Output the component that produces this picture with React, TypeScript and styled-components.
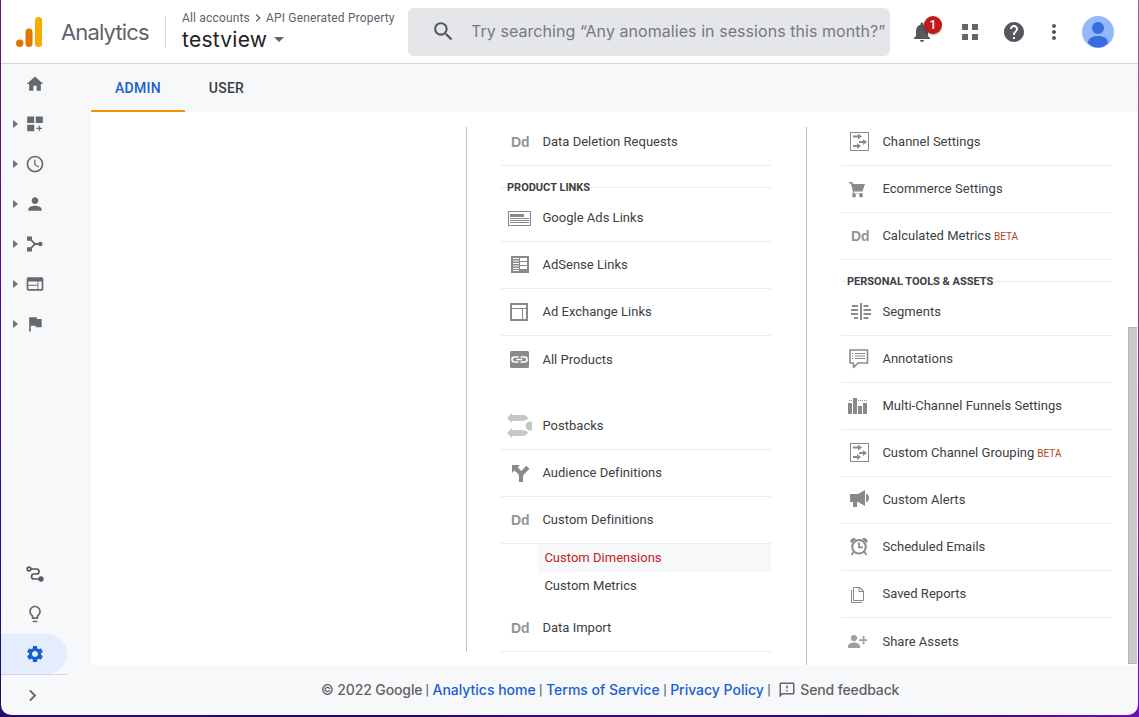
import React from 'react';
import styled, { createGlobalStyle } from 'styled-components';
import {
  MdHome, MdPerson, MdFlag, MdSettings, MdLightbulbOutline, MdAccessTime, MdWeb,
  MdNotifications, MdHelp, MdMoreVert, MdSearch, MdChevronRight, MdOutlineFeedback,
} from 'react-icons/md';

const display = "Inter, Roboto, sans-serif";

const GlobalStyle = createGlobalStyle`
  * { box-sizing: border-box; }
  body { margin: 0; font-family: Roboto, "Liberation Sans", sans-serif; color: #3c4043; }
  svg { display: block; flex: none; }
`;

const Desktop = styled.div`
  width: 1139px;
  height: 717px;
  padding: 0 1px 2px;
  overflow: hidden;
  background:
    linear-gradient(90deg, #250a6c 0%, #210963 38%, #34087f 45%, #260a78 75%, #4b0a8c 90%, #6c10b4 100%) 0 715px / 100% 2px no-repeat,
    linear-gradient(180deg, #a0648f 0%, #96457c 30%, #8d1f68 70%, #6c10b4 100%) 100% 0 / 20px 100% no-repeat,
    linear-gradient(180deg, #6d1183 0%, #4f0d86 40%, #2c0a7c 80%, #250a6c 100%);
`;

const Window = styled.div`
  height: 715px;
  display: flex;
  flex-direction: column;
  background: #f7f8fa;
  border-radius: 0 0 10px 10px;
  overflow: hidden;
`;

const Header = styled.header`
  height: 64px;
  flex: none;
  display: flex;
  align-items: center;
  background: #fff;
  border-bottom: 1px solid #d4d6d9;
  padding-left: 14px;
`;

const Product = styled.div`
  width: 104px;
  margin-left: 17px;
  font: 400 22px ${display};
  letter-spacing: -0.85px;
  color: #5f6368;
`;

const Divider = styled.div`
  width: 1px;
  height: 32px;
  margin-right: 16px;
  background: #dadce0;
`;

const Account = styled.div`
  width: 226px;
  flex: none;
  padding-bottom: 1px;
  white-space: nowrap;
`;

const Crumbs = styled.div`
  display: flex;
  align-items: center;
  height: 16px;
  font-size: 12px;
  letter-spacing: 0.17px;
  color: #5f6368;
`;

const View = styled.div`
  display: flex;
  align-items: center;
  height: 27px;
  gap: 7px;
  font: 400 21px ${display};
  letter-spacing: 0.25px;
  color: #202124;
`;

const Search = styled.div`
  width: 482px;
  height: 48px;
  flex: none;
  display: flex;
  align-items: center;
  gap: 15px;
  padding: 0 0 1px 23px;
  border-radius: 6px;
  background: #e4e6e9;
  color: #757a7e;
  font: 400 16px ${display};
  letter-spacing: 0.06px;
  white-space: nowrap;
  svg { color: #54585c; }
`;

const Actions = styled.div`
  display: flex;
  align-items: center;
  margin-left: 20px;
  gap: 20px;
  color: #55585d;
`;

const Bell = styled.div`
  position: relative;
  margin-right: 4px;
`;

const Badge = styled.span`
  position: absolute;
  left: 14px;
  top: -4px;
  width: 18px;
  height: 18px;
  border-radius: 50%;
  background: #c01a1a;
  color: #fff;
  font: 500 12px/18px Roboto, sans-serif;
  text-align: center;
  box-shadow: 0 1px 2px rgba(0, 0, 0, 0.35);
`;

const MoreIcon = styled(MdMoreVert)`
  margin: 0 -4px;
`;

const Body = styled.div`
  flex: 1;
  display: flex;
  min-height: 0;
`;

const Sidebar = styled.nav`
  width: 90px;
  flex: none;
  display: flex;
  flex-direction: column;
  color: #66696c;
`;

const NavItem = styled.div<{ $active?: boolean }>`
  width: 66px;
  height: 40px;
  flex: none;
  display: flex;
  align-items: center;
  color: ${p => (p.$active ? '#1a5fd0' : 'inherit')};
  background: ${p => (p.$active ? '#e3edfd' : 'transparent')};
  border-radius: 0 20px 20px 0;
`;

const Expander = styled.span<{ $shown?: boolean }>`
  margin: 0 7px 0 12px;
  border: 4.5px solid transparent;
  border-left: 5px solid ${p => (p.$shown ? '#6f7274' : 'transparent')};
  border-right-width: 0;
  width: 5px;
`;

const Spacer = styled.div`
  flex: 1;
`;

const Collapse = styled.div`
  width: 66px;
  height: 41px;
  flex: none;
  display: flex;
  align-items: center;
  padding: 1px 0 0 20px;
  border-top: 1px solid #d5d7da;
`;

const Main = styled.main`
  flex: 1;
  display: flex;
  flex-direction: column;
`;

const Tabs = styled.div`
  height: 48px;
  flex: none;
  display: flex;
`;

const Tab = styled.div<{ $active?: boolean }>`
  height: 48px;
  padding: 0 24px;
  line-height: 49px;
  font-size: 14px;
  font-weight: 500;
  letter-spacing: 0.25px;
  color: ${p => (p.$active ? '#1a5fd0' : '#3c4043')};
  border-bottom: 2px solid ${p => (p.$active ? '#fb9004' : 'transparent')};
`;

const Content = styled.section`
  height: 553px;
  display: flex;
  background: #fff;
`;

const Column = styled.div<{ $w: number; $h: number; $last?: boolean }>`
  width: ${p => p.$w}px;
  height: ${p => p.$h}px;
  margin-top: 15px;
  flex: none;
  border-right: ${p => (p.$last ? '0' : '1px solid #c0c2c5')};
`;

const Menu = styled.div<{ $w: number }>`
  width: ${p => p.$w}px;
  margin: -8px 0 0 34px;
`;

const Row = styled.div<{ $plain?: boolean }>`
  height: ${p => (p.$plain ? 48 : 47)}px;
  border-bottom: ${p => (p.$plain ? '0' : '1px solid #ebecee')};
  padding-left: 4px;
  display: flex;
  align-items: center;
  font-size: 13px;
  letter-spacing: 0.02px;
  color: #3c4043;
  white-space: nowrap;
`;

const RowIcon = styled.svg`
  margin-right: 7.4px;
  color: #8a8a8a;
`;

const RowLabel = styled.span`
  padding-bottom: 2px;
`;

const Beta = styled.span`
  margin-left: 3px;
  font-size: 10px;
  letter-spacing: 0;
  color: #b3441a;
`;

const Section = styled.div`
  height: 29px;
  padding-top: 21px;
  background: linear-gradient(#ebecee, #ebecee) 0 21px / 100% 1px no-repeat;
`;

const SectionLabel = styled.span`
  display: block;
  width: max-content;
  margin: -6px 0 0 6px;
  background: #fff;
  font-size: 11px;
  font-weight: 700;
  line-height: 14px;
  color: #3c4043;
`;

const Gap = styled.div<{ $h: number }>`
  height: ${p => p.$h}px;
`;

const SubItem = styled.div<{ $active?: boolean }>`
  height: 28px;
  margin-left: 37px;
  padding-left: 6.4px;
  line-height: 28px;
  font-size: 13px;
  letter-spacing: 0.02px;
  color: ${p => (p.$active ? '#c5221f' : '#3c4043')};
  background: ${p => (p.$active ? '#f7f8fa' : 'transparent')};
`;

const ScrollThumb = styled.div`
  width: 9px;
  height: 337px;
  margin: 215px 1px 0 auto;
  border: 1px solid #b4b4b4;
  border-right: 0;
  background: #cacaca;
`;

const Footer = styled.footer`
  height: 50px;
  display: flex;
  align-items: center;
  padding: 0 0 1px 230px;
  font: 500 14px ${display};
  letter-spacing: -0.02px;
  color: #5f6368;
  white-space: nowrap;
`;

const Copyright = styled.span`
  width: 101px;
  letter-spacing: -0.12px;
`;

const Separator = styled.span`
  width: 10.5px;
  flex: none;
  text-align: center;
  font-family: Roboto, sans-serif;
`;

const Link = styled.a`
  color: #1a5fd0;
`;

const Feedback = styled.span`
  display: flex;
  align-items: center;
  gap: 4px;
  margin-left: 4px;
  letter-spacing: -0.13px;
`;

const channel = (
  <>
    <rect x="5.5" y="5.5" width="18" height="18" fill="none" stroke="currentColor" />
    <path d="M8 8.5h5V6.600l4 2.900-4 2.900v-1.900H8zM14 14h4v-2l4 3-4 3v-2h-4zM8 18h4v-2l4 3-4 3v-2H8z" fill="currentColor" />
  </>
);

const icons: Record<string, React.ReactNode> = {
  dd: <text x="5.900" y="19.500" fontFamily="Liberation Sans, Arial, sans-serif" fontWeight="700" fontSize="14" fill="#949494">Dd</text>,
  ads: (
    <>
      <rect x="3.500" y="8.500" width="22" height="14" fill="none" stroke="currentColor" />
      <path d="M5 11h14v3H5zM5 15h19v1H5zM5 17h19v1H5zM5 19h19v1H5z" fill="currentColor" />
    </>
  ),
  adsense: (
    <>
      <path d="M6 6h18v17H6z" fill="currentColor" />
      <path d="M8 8h6v1H8zM8 10.500h6v1H8zM8 13h6v1H8zM8 15.500h6v1H8zM8 18h6v1H8zM8 20h6v1H8zM15 8h7v3h-7zM15 12h7v3h-7zM15 16h7v3h-7z" fill="#fff" />
    </>
  ),
  exchange: (
    <>
      <rect x="6" y="7" width="16" height="16" fill="none" stroke="currentColor" strokeWidth="2" />
      <path d="M7 11.500h14M17.500 11.500V22" fill="none" stroke="currentColor" />
    </>
  ),
  products: (
    <>
      <rect x="5" y="6" width="19" height="17" rx="1.500" fill="currentColor" />
      <path d="M13.500 12H9.500a2.300 2.300 0 0 0 0 5h4M15.500 12h4a2.300 2.300 0 0 1 0 5h-4M11.500 14.500h6" fill="none" stroke="#fff" strokeWidth="1.600" />
    </>
  ),
  postbacks: (
    <>
      <path d="M2 7l5-5v2h10c4 0 6 2 6 4-2 1-4 2-7 2H7v2zM2 22l5-5v2h9c3 0 5 1 7 2-1 3-3 4-6 4H7v2z" fill="#c6c6c6" />
      <path d="M27 10.500v9c-4 .5-6.500-1.500-6.500-4.500s2.500-5 6.500-4.500z" fill="#c6c6c6" />
    </>
  ),
  audience: (
    <path d="M7 7h8l-2.300 2.300 3.600 3.800 5-5.300 3.200 3-5.200 5.200c-1 1-1.300 1.800-1.300 3.200V24h-4v-5c0-1.600-.5-2.600-1.500-3.700L9.300 12.500 7 15z" fill="currentColor" />
  ),
  channel,
  cart: (
    <path d="M4 8h3.200l1 2H20l-2.600 7.500H9.300l-.7 1.500H18v.5H7.500l.3-2.200L6 9.500H4zM9 19.500a2 2 0 1 1 0 4 2 2 0 0 1 0-4zM16 19.500a2 2 0 1 1 0 4 2 2 0 0 1 0-4z" fill="currentColor" />
  ),
  segments: (
    <path d="M15 6h2v17h-2zM7 8h6v2H7zM6 12h7v2H6zM6 16h7v2H6zM9 20h4v2H9zM18.500 8h5v2h-5zM18.500 12h7.500v2h-7.500zM18.500 16h7.500v2h-7.500zM18.500 20h5v2h-5z" fill="currentColor" />
  ),
  annotations: (
    <>
      <path d="M5 6h17.500v13H13L8.500 23.500V19H5z" fill="none" stroke="currentColor" strokeWidth="1.600" strokeLinejoin="round" />
      <path d="M7 9.500h1.500M10 9.500h10M7 12h1.500M10 12h10M7 14.500h1.500M10 14.500h10" stroke="currentColor" />
    </>
  ),
  funnels: (
    <>
      <path d="M3 12h4v11H3zM8 7h4v16H8zM13 15h4v8h-4zM18 12h4v11h-4z" fill="currentColor" />
      <path d="M4 9.500h4M13 9.500h9" stroke="currentColor" strokeDasharray="1 1" />
    </>
  ),
  alerts: (
    <path d="M5 9h8l7-4v16l-7-4h-1v5H8v-5H5zM21 9c4 0 4 8 0 8z" fill="currentColor" />
  ),
  alarm: (
    <>
      <circle cx="14" cy="14.800" r="6.800" fill="none" stroke="currentColor" strokeWidth="2" />
      <path d="M14 10.500v4.800h4M8.500 20L6.500 23M19.500 20l2 3" fill="none" stroke="currentColor" strokeWidth="1.800" />
      <path d="M6 10.500A3 3 0 0 1 10.500 7zM22 10.500A3 3 0 0 0 17.500 7z" fill="currentColor" stroke="currentColor" />
    </>
  ),
  reports: (
    <>
      <path d="M8.500 8.500h6.500l3.500 3.500v9.500h-10z" fill="none" stroke="currentColor" />
      <path d="M14 8.500v4h4.500zM6.500 11v12.500H17" fill="none" stroke="currentColor" />
    </>
  ),
  share: (
    <path d="M9 8a3 3 0 1 1 0 6.200A3 3 0 0 1 9 8zM3 21v-1.800c0-2.500 4-3.600 6-3.600s6 1.100 6 3.600V21zM17.700 9h1.800v3.200H22V14h-2.500v3.300h-1.800V14H14v-1.800h3.700z" fill="#a0a0a0" />
  ),
};

type ItemProps = { icon: string; label: string; beta?: boolean; plain?: boolean };

const Item = ({ icon, label, beta, plain }: ItemProps) => (
  <Row $plain={plain}>
    <RowIcon width="30" height="30" viewBox="0 0 30 30">{icons[icon]}</RowIcon>
    <RowLabel>{label}</RowLabel>
    {beta && <Beta>BETA</Beta>}
  </Row>
);

const Heading = ({ children }: { children: string }) => (
  <Section><SectionLabel>{children}</SectionLabel></Section>
);

const CustomizeIcon = () => (
  <svg width="20" height="20" viewBox="0 0 20 20" fill="currentColor">
    <path d="M2.200 2.500h7v6.500h-7zM10.800 2.500h7v6.500h-7zM2.200 10.800h7v6.500h-7zM13.600 11.500h1.200v2.200H17v1.200h-2.200V17h-1.200v-2.100h-2.200v-1.200h2.200z" />
  </svg>
);

const AcquisitionIcon = () => (
  <svg width="20" height="20" viewBox="0 0 20 20" fill="currentColor">
    <path d="M2 2.500h5v3.200L10.500 9h2.700a2.300 2.300 0 1 1 0 2h-2.700L7 14.300v3.200H2v-4.300h3.500L8.800 10 5.500 6.800H2z" />
  </svg>
);

const AttributionIcon = () => (
  <svg width="20" height="20" viewBox="0 0 20 20" fill="none" stroke="#54585c" strokeWidth="1.700">
    <circle cx="4" cy="5" r="1.800" />
    <path d="M6 5h5.500a2.500 2.500 0 0 1 0 5H9a2.500 2.500 0 0 0 0 5h6" />
    <circle cx="16" cy="15" r="1.800" fill="#54585c" />
  </svg>
);

const navItems = [CustomizeIcon, MdAccessTime, MdPerson, AcquisitionIcon, MdWeb, MdFlag];

export default function App() {
  return (
    <Desktop>
      <GlobalStyle />
      <Window>
        <Header>
          <svg width="29" height="32" viewBox="0 0 29 32">
            <circle cx="4.700" cy="27.300" r="3.700" fill="#e37400" />
            <rect x="10.500" y="12.500" width="7" height="18.500" rx="3.500" fill="#e37400" />
            <rect x="20" y="1" width="7" height="30" rx="3.500" fill="#f9ab00" />
          </svg>
          <Product>Analytics</Product>
          <Divider />
          <Account>
            <Crumbs>All accounts<MdChevronRight size={16} />API Generated Property</Crumbs>
            <View>
              testview
              <svg width="10" height="5" viewBox="0 0 10 5"><path d="M0 0h10L5 5z" fill="#5f6368" /></svg>
            </View>
          </Account>
          <Search>
            <MdSearch size={25} />
            Try searching “Any anomalies in sessions this month?”
          </Search>
          <Actions>
            <Bell><MdNotifications size={24} /><Badge>1</Badge></Bell>
            <svg width="24" height="24" viewBox="0 0 24 24" fill="#666"><path d="M4 4h6v6H4zM14 4h6v6h-6zM4 14h6v6H4zM14 14h6v6h-6z" /></svg>
            <MdHelp size={24} />
            <MoreIcon size={24} />
            <svg width="32" height="32" viewBox="0 0 32 32">
              <circle cx="16" cy="16" r="16" fill="#93b8fb" />
              <circle cx="16" cy="12" r="6" fill="#3a6be0" />
              <path d="M6 27c0-4.500 4-7 10-7s10 2.500 10 7c-5 6-15 6-20 0z" fill="#3a6be0" />
            </svg>
          </Actions>
        </Header>
        <Body>
          <Sidebar>
            <NavItem><Expander /><MdHome size={20} /></NavItem>
            {navItems.map((Icon, i) => (
              <NavItem key={i}><Expander $shown /><Icon size={20} /></NavItem>
            ))}
            <Spacer />
            <NavItem><Expander /><AttributionIcon /></NavItem>
            <NavItem><Expander /><MdLightbulbOutline size={20} /></NavItem>
            <NavItem $active><Expander /><MdSettings size={20} /></NavItem>
            <Collapse><MdChevronRight size={23} /></Collapse>
          </Sidebar>
          <Main>
            <Tabs>
              <Tab $active>ADMIN</Tab>
              <Tab>USER</Tab>
            </Tabs>
            <Content>
              <Column $w={376} $h={525} />
              <Column $w={340} $h={538}>
                <Menu $w={270}>
                  <Item icon="dd" label="Data Deletion Requests" />
                  <Heading>PRODUCT LINKS</Heading>
                  <Item icon="ads" label="Google Ads Links" />
                  <Item icon="adsense" label="AdSense Links" />
                  <Item icon="exchange" label="Ad Exchange Links" />
                  <Item icon="products" label="All Products" plain />
                  <Gap $h={19} />
                  <Item icon="postbacks" label="Postbacks" />
                  <Item icon="audience" label="Audience Definitions" />
                  <Item icon="dd" label="Custom Definitions" />
                  <SubItem $active>Custom Dimensions</SubItem>
                  <SubItem>Custom Metrics</SubItem>
                  <Gap $h={5} />
                  <Item icon="dd" label="Data Import" />
                </Menu>
              </Column>
              <Column $w={320} $h={538} $last>
                <Menu $w={271}>
                  <Item icon="channel" label="Channel Settings" />
                  <Item icon="cart" label="Ecommerce Settings" />
                  <Item icon="dd" label="Calculated Metrics" beta />
                  <Heading>{'PERSONAL TOOLS & ASSETS'}</Heading>
                  <Item icon="segments" label="Segments" />
                  <Item icon="annotations" label="Annotations" />
                  <Item icon="funnels" label="Multi-Channel Funnels Settings" />
                  <Item icon="channel" label="Custom Channel Grouping" beta />
                  <Item icon="alerts" label="Custom Alerts" />
                  <Item icon="alarm" label="Scheduled Emails" />
                  <Item icon="reports" label="Saved Reports" />
                  <Item icon="share" label="Share Assets" plain />
                </Menu>
              </Column>
              <ScrollThumb />
            </Content>
            <Footer>
              <Copyright>© 2022 Google</Copyright>
              <Separator>|</Separator>
              <Link>Analytics home</Link>
              <Separator>|</Separator>
              <Link>Terms of Service</Link>
              <Separator>|</Separator>
              <Link>Privacy Policy</Link>
              <Separator>|</Separator>
              <Feedback><MdOutlineFeedback size={18} />Send feedback</Feedback>
            </Footer>
          </Main>
        </Body>
      </Window>
    </Desktop>
  );
}
